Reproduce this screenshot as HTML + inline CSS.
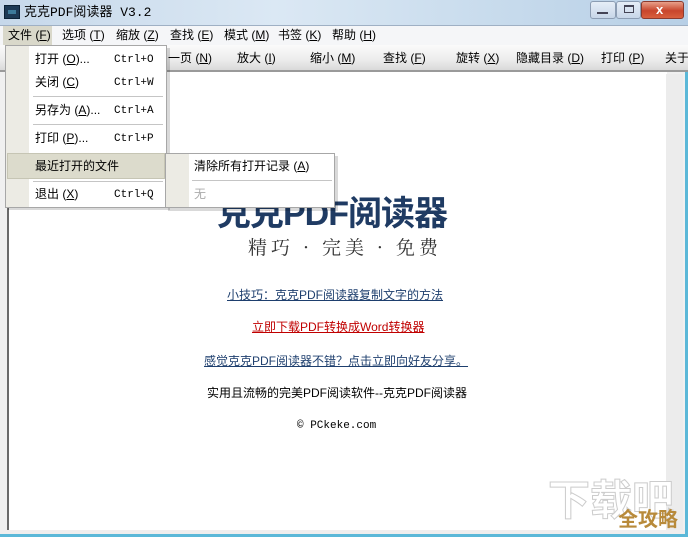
<!DOCTYPE html>
<html><head><meta charset="utf-8"><style>
*{margin:0;padding:0;box-sizing:border-box}
body{width:688px;height:537px;overflow:hidden;position:relative;background:#d6e3f0;font-family:"Liberation Sans","Noto Sans CJK SC",sans-serif;font-size:12px;color:#000}
.a{position:absolute;line-height:14px}
.t{white-space:nowrap}
.m{font-family:'Liberation Mono',monospace;font-size:11px}
</style></head><body>
<div class="a" style="left:0;top:0;width:688px;height:25px;background:linear-gradient(90deg,#c6d8ea,#dbe8f4 40%,#c9dced 70%,#b7cfe6)"></div>
<div class="a" style="left:4px;top:5px;width:16px;height:14px;background:#1d3a55;border:1px solid #0c2236"></div>
<div class="a" style="left:8px;top:10px;width:8px;height:4px;background:#3d7a9a"></div>
<div class="a t" style="left:24px;top:6px;font-size:13px;font-family:'Liberation Mono','Noto Sans CJK SC',monospace">克克PDF阅读器 V3.2</div>
<div class="a" style="left:590px;top:1px;width:26px;height:18px;border:1px solid #8c9db3;border-radius:3px;background:linear-gradient(#e6eef7,#c7d6e8)"></div>
<div class="a" style="left:597px;top:12px;width:11px;height:2px;background:#445"></div>
<div class="a" style="left:616px;top:1px;width:25px;height:18px;border:1px solid #8c9db3;border-radius:3px;background:linear-gradient(#e6eef7,#c7d6e8)"></div>
<div class="a" style="left:624px;top:5px;width:10px;height:8px;border:1px solid #445;border-top-width:2px"></div>
<div class="a" style="left:641px;top:1px;width:43px;height:18px;border:1px solid #8b3a2e;border-radius:3px;background:linear-gradient(#e8a08a,#c8452c 55%,#d9603e)"></div>
<div class="a t" style="left:656px;top:3px;color:#fff;font-weight:bold;font-size:13px">x</div>
<div class="a" style="left:0;top:25px;width:688px;height:20px;background:#f5f6f8;border-top:1px solid #9fb0c4"></div>
<div class="a" style="left:3px;top:26px;width:49px;height:19px;background:#d9d8ca"></div>
<div class="a t" style="left:8px;top:28px">文件 (<u>F</u>)</div>
<div class="a t" style="left:62px;top:28px">选项 (<u>T</u>)</div>
<div class="a t" style="left:116px;top:28px">缩放 (<u>Z</u>)</div>
<div class="a t" style="left:170px;top:28px">查找 (<u>E</u>)</div>
<div class="a t" style="left:224px;top:28px">模式 (<u>M</u>)</div>
<div class="a t" style="left:278px;top:28px">书签 (<u>K</u>)</div>
<div class="a t" style="left:332px;top:28px">帮助 (<u>H</u>)</div>
<div class="a" style="left:0;top:45px;width:688px;height:27px;background:linear-gradient(#fbfbfb,#ececec 60%,#d9d9d9);border-bottom:2px solid #9a9a9a"></div>
<div class="a t" style="left:168px;top:51px">一页 (<u>N</u>)</div>
<div class="a t" style="left:237px;top:51px">放大 (<u>I</u>)</div>
<div class="a t" style="left:310px;top:51px">缩小 (<u>M</u>)</div>
<div class="a t" style="left:383px;top:51px">查找 (<u>F</u>)</div>
<div class="a t" style="left:456px;top:51px">旋转 (<u>X</u>)</div>
<div class="a t" style="left:516px;top:51px">隐藏目录 (<u>D</u>)</div>
<div class="a t" style="left:601px;top:51px">打印 (<u>P</u>)</div>
<div class="a t" style="left:665px;top:51px">关于</div>
<div class="a" style="left:0;top:72px;width:688px;height:465px;background:#f0f0f0"></div>
<div class="a" style="left:7px;top:72px;width:660px;height:458px;background:#fff;border-left:2px solid #6a6a6a"></div>
<div class="a" style="left:666px;top:74px;width:17px;height:456px;background:#ececec"></div>
<div class="a" style="left:0;top:530px;width:688px;height:7px;background:#efeeee;border-bottom:3px solid #5bb8d8"></div>
<div class="a" style="left:685px;top:72px;width:3px;height:465px;background:#5bb8d8"></div>
<div class="a t" style="left:217px;top:197px;font-size:34px;line-height:34px;font-weight:bold;color:#1f3b63;letter-spacing:-1px">克克PDF阅读器</div>
<div class="a t" style="left:248px;top:236px;font-size:19px;line-height:22px;font-family:'Noto Serif CJK SC',serif;color:#333;letter-spacing:4px">精巧 · 完美 · 免费</div>
<div class="a t" style="left:227px;top:288px;color:#1e3f6e;text-decoration:underline">小技巧：克克PDF阅读器复制文字的方法</div>
<div class="a t" style="left:252px;top:320px;color:#c00000;text-decoration:underline">立即下载PDF转换成Word转换器</div>
<div class="a t" style="left:204px;top:354px;color:#1e3f6e;text-decoration:underline">感觉克克PDF阅读器不错？点击立即向好友分享。</div>
<div class="a t" style="left:207px;top:386px">实用且流畅的完美PDF阅读软件--克克PDF阅读器</div>
<div class="a t m" style="left:297px;top:419px">© PCkeke.com</div>
<div class="a t" style="left:548px;top:478px;font-size:42px;line-height:46px;font-weight:bold;color:#fff;-webkit-text-stroke:1px #ccc">下载吧</div>
<div class="a t" style="left:618px;top:509px;font-size:20px;line-height:22px;font-weight:bold;color:#b88a3a">全攻略</div>
<div class="a" style="left:8px;top:48px;width:162px;height:162px;background:rgba(0,0,0,.15)"></div>
<div class="a" style="left:5px;top:45px;width:162px;height:163px;background:#fff;border:1px solid #a7a7a7"></div>
<div class="a" style="left:6px;top:46px;width:23px;height:161px;background:#ecebe4"></div>
<div class="a t" style="left:35px;top:52px">打开 (<u>O</u>)...</div><div class="a t m" style="left:114px;top:53px">Ctrl+O</div>
<div class="a t" style="left:35px;top:75px">关闭 (<u>C</u>)</div><div class="a t m" style="left:114px;top:76px">Ctrl+W</div>
<div class="a" style="left:33px;top:96px;width:130px;height:1px;background:#c5c5c5"></div>
<div class="a t" style="left:35px;top:103px">另存为 (<u>A</u>)...</div><div class="a t m" style="left:114px;top:104px">Ctrl+A</div>
<div class="a" style="left:33px;top:124px;width:130px;height:1px;background:#c5c5c5"></div>
<div class="a t" style="left:35px;top:131px">打印 (<u>P</u>)...</div><div class="a t m" style="left:114px;top:132px">Ctrl+P</div>
<div class="a" style="left:7px;top:153px;width:158px;height:26px;background:#dcdbcc;border:1px solid #c6c5b4"></div>
<div class="a t" style="left:35px;top:159px">最近打开的文件</div>
<div class="a" style="left:33px;top:181px;width:130px;height:1px;background:#c5c5c5"></div>
<div class="a t" style="left:35px;top:187px">退出 (<u>X</u>)</div><div class="a t m" style="left:114px;top:188px">Ctrl+Q</div>
<div class="a" style="left:168px;top:156px;width:170px;height:55px;background:rgba(0,0,0,.15)"></div>
<div class="a" style="left:165px;top:153px;width:170px;height:55px;background:#fff;border:1px solid #a7a7a7"></div>
<div class="a" style="left:166px;top:154px;width:23px;height:53px;background:#ecebe4"></div>
<div class="a t" style="left:194px;top:159px">清除所有打开记录 (<u>A</u>)</div>
<div class="a" style="left:192px;top:180px;width:140px;height:1px;background:#c5c5c5"></div>
<div class="a t" style="left:194px;top:187px;color:#aaa">无</div>
</body></html>
